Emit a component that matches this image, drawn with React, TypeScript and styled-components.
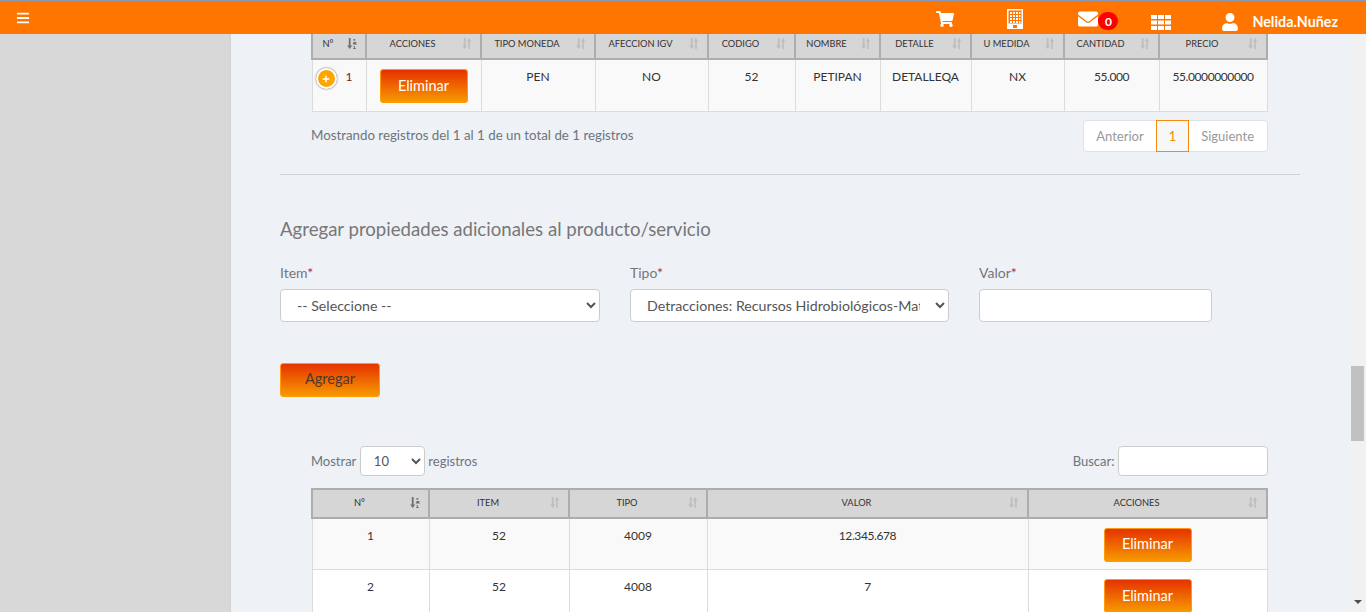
import { createGlobalStyle, styled } from "styled-components";
import { FaBars, FaShoppingCart, FaEnvelope, FaUser, FaPlus } from "react-icons/fa";

const Global = createGlobalStyle`
  html, body { margin: 0; padding: 0; height: 100%; overflow: hidden; }
  body { font-family: Lato, "Liberation Sans", sans-serif; font-size: 14px; color: #6c757d; }
  * { box-sizing: border-box; }
`;

const Page = styled.div`
  width: 1366px;
  height: 612px;
  display: flex;
  flex-direction: column;
  overflow: hidden;
  background: #eef1f6;
`;

const Navbar = styled.header`
  flex: 0 0 34px;
  position: relative;
  background: #ff7500;
  border-top: 1px solid #8a9ab5;
  display: flex;
  align-items: center;
  padding: 0 28px 0 16px;
  color: #fff;
  z-index: 2;
`;

const Burger = styled.span`
  display: flex;
  font-size: 14px;
`;

const NavIcons = styled.div`
  margin-left: auto;
  display: flex;
  align-items: center;
`;

const NavIcon = styled.span<{ $w: number; $size: number; $top: number }>`
  width: ${(p) => p.$w}px;
  display: flex;
  font-size: ${(p) => p.$size}px;
  margin-top: ${(p) => p.$top}px;
`;

const MailBadge = styled.span`
  width: 20px;
  height: 18px;
  border-radius: 9px;
  background: #f00;
  color: #fff;
  font-size: 12px;
  font-weight: 700;
  display: flex;
  align-items: center;
  justify-content: center;
  margin: 7px 33px 0 0;
`;

const UserName = styled.span`
  font-size: 14.3px;
  font-weight: 700;
  color: #fff;
  margin: 7px 0 0 14px;
`;

const Body = styled.div`
  flex: 1;
  display: flex;
  min-height: 0;
`;

const Sidebar = styled.aside`
  flex: 0 0 231px;
  background: #d8d8d8;
  box-shadow: inset -2px 0 2px -1px #cfd2d6;
`;

const Main = styled.main`
  flex: 1;
  min-width: 0;
  margin-top: -5px;
  padding: 0 50px 0 49px;
  overflow: hidden;
`;

const Indented = styled.div`
  padding: 0 32px 0 31px;
`;

const Table = styled.table`
  width: 955px;
  table-layout: fixed;
  border-collapse: collapse;
  font-size: 12px;
  color: #333;
`;

const Th = styled.th<{ $w: number }>`
  width: ${(p) => p.$w}px;
  height: 29px;
  position: relative;
  background: #d6d6d6;
  border: 2px solid #adadad;
  font-size: 9.3px;
  font-weight: 400;
  color: #333;
  text-align: center;
  padding: 0 28px 2px 6px;
  white-space: nowrap;
`;

const SortMark = styled.svg<{ $active?: boolean }>`
  position: absolute;
  right: 7px;
  top: 7px;
  width: 11px;
  height: 11px;
  fill: ${(p) => (p.$active ? "#6f6f6f" : "#bdbdbd")};
`;

const Row = styled.tr<{ $alt?: boolean }>`
  height: 52px;
  background: ${(p) => (p.$alt ? "#f9f9f9" : "#fff")};
`;

const Td = styled.td<{ $tight?: boolean }>`
  border: 1px solid #dcdcdc;
  vertical-align: top;
  text-align: center;
  padding: 9px 4px 0;
  line-height: 15px;
  letter-spacing: ${(p) => (p.$tight ? "-0.4px" : "0")};
`;

const IndexTd = styled(Td)`
  position: relative;
  text-align: right;
  padding-right: 13px;
  color: #7a2020;
`;

const Expand = styled.span`
  position: absolute;
  left: 3px;
  top: 8px;
  width: 21px;
  height: 21px;
  border-radius: 50%;
  background: #ffa500;
  border: 2px solid #fff;
  box-shadow: 0 0 2px #555;
  color: #fff;
  font-size: 8px;
  display: flex;
  align-items: center;
  justify-content: center;
`;

const GradientButton = styled.button`
  background: linear-gradient(#e63200, #f79a00);
  border: 1px solid #ff9d00;
  border-radius: 3px;
  font-family: inherit;
  font-size: 14.5px;
  padding: 0 0 2px;
`;

const DeleteButton = styled(GradientButton)`
  width: 88px;
  height: 34px;
  color: #fff;
`;

const AddButton = styled(GradientButton)`
  width: 100px;
  height: 34px;
  color: #4a3a30;
  display: block;
`;

const TableFoot = styled.div`
  height: 62px;
  padding-top: 8px;
  display: flex;
  justify-content: space-between;
  align-items: flex-start;
`;

const InfoText = styled.span`
  font-size: 13.3px;
  color: #6c757d;
  margin-top: 7px;
`;

const Pager = styled.div`
  display: flex;
  height: 32px;
  padding-right: 1px;
  background: #fff;
  border: 1px solid #dee2e6;
  border-radius: 4px;
  font-size: 13px;
  color: #999;
`;

const PageLink = styled.span<{ $current?: boolean }>`
  display: flex;
  align-items: center;
  padding: 0 12px;
  ${(p) =>
    p.$current &&
    `margin: -1px 0;
     border: 1px solid #f58a0f;
     background: #f7f7f7;
     color: #f58a0f;`}
`;

const Rule = styled.hr`
  margin: 0;
  border: 0;
  border-top: 1px solid #cfd2d6;
`;

const Title = styled.h4`
  margin: 43px 0 24px;
  font-size: 18.6px;
  line-height: 22px;
  font-weight: 400;
  color: #777;
`;

const FormRow = styled.div`
  display: flex;
  gap: 30px;
  margin-bottom: 41px;
`;

const Field = styled.label<{ $w: number }>`
  width: ${(p) => p.$w}px;
  display: block;
  font-size: 14px;
  color: #777;
`;

const Required = styled.span`
  color: #a33;
`;

const LabelText = styled.div`
  height: 17px;
  line-height: 17px;
  margin-bottom: 8px;
`;

const Select = styled.select`
  width: 100%;
  height: 33px;
  background-color: #fff;
  border: 1px solid #ccc;
  border-radius: 4px;
  padding: 0 12px;
  font-family: inherit;
  font-size: 14.2px;
  color: #555;
`;

const Input = styled.input`
  width: 100%;
  height: 33px;
  background: #fff;
  border: 1px solid #ccc;
  border-radius: 4px;
`;

const SecondBlock = styled(Indented)`
  margin-top: 49px;
`;

const Toolbar = styled.div`
  display: flex;
  justify-content: space-between;
  align-items: center;
  height: 30px;
  margin-bottom: 12px;
  font-size: 13px;
`;

const ToolbarSide = styled.div`
  display: flex;
  align-items: center;
  gap: 3.5px;
`;

const LengthSelect = styled(Select)`
  width: 65px;
  height: 30px;
  padding: 0 9px;
  font-size: 13px;
`;

const SearchInput = styled(Input)`
  width: 150px;
  height: 30px;
`;

const Scrollbar = styled.div`
  flex: 0 0 16px;
  background: #f1f1f1;
  padding: 332px 2px 0 1px;
  position: relative;
`;

const Thumb = styled.div`
  height: 75px;
  background: #c1c1c1;
`;

const ArrowDown = styled.span`
  position: absolute;
  bottom: 8px;
  left: 4px;
  border: 4px solid transparent;
  border-top: 4px solid #505050;
  border-bottom: 0;
`;

const BuildingIcon = () => (
  <svg width="16" height="20" viewBox="0 0 16 20" fill="#fff">
    <path fillRule="evenodd" d="M0 0h16v20H0zM1.500 1.500v13h13v-13zM6 16v3h4v-3z" />
    <path d="M3 3h2v2H3zM6 3h2v2H6zM9 3h2v2H9zM12 3h1.500v2H12zM3 6h2v2H3zM6 6h2v2H6zM9 6h2v2H9zM12 6h1.500v2H12zM3 9h2v2H3zM6 9h2v2H6zM9 9h2v2H9zM12 9h1.500v2H12zM3 12h2v2H3zM6 12h2v2H6zM9 12h2v2H9zM12 12h1.500v2H12z" />
  </svg>
);

const GridIcon = () => (
  <svg width="20" height="15" viewBox="0 0 20 15" fill="#fff">
    <path d="M0 0h6v4H0zM7 0h6v4H7zM14 0h6v4h-6zM0 5.500h6v4H0zM7 5.500h6v4H7zM14 5.500h6v4h-6zM0 11h6v4H0zM7 11h6v4H7zM14 11h6v4h-6z" />
  </svg>
);

const Sort = ({ active }: { active?: boolean }) => (
  <SortMark $active={active} viewBox="0 0 11 11">
    <path d="M1.800 0h1.800v7.500H5.200L2.700 11 .2 7.500h1.600z" />
    {active ? (
      <path d="M6.500 8h1.300v2h1v1H6.200v-1h.8zM6.500 1h1.700v1.700h-1.700zM5.800 4h3.600v1.100h-1l2 1.400H5.800V5.400l1.200-.3z" />
    ) : (
      <path d="M7.800 11H6.200V3.500H4.800L7 0l2.200 3.500H7.800z" />
    )}
  </SortMark>
);

const Head = ({ cols }: { cols: [string, number][] }) => (
  <thead>
    <tr>
      {cols.map(([label, w], i) => (
        <Th key={label} $w={w}>
          {label}
          <Sort active={i === 0} />
        </Th>
      ))}
    </tr>
  </thead>
);

const productCols: [string, number][] = [
  ["N°", 54],
  ["ACCIONES", 115],
  ["TIPO MONEDA", 114],
  ["AFECCION IGV", 113],
  ["CODIGO", 87],
  ["NOMBRE", 85],
  ["DETALLE", 91],
  ["U MEDIDA", 93],
  ["CANTIDAD", 95],
  ["PRECIO", 108],
];

const propCols: [string, number][] = [
  ["N°", 117],
  ["ITEM", 140],
  ["TIPO", 138],
  ["VALOR", 321],
  ["ACCIONES", 239],
];

const props = [
  { n: 1, item: 52, tipo: 4009, valor: "12.345.678" },
  { n: 2, item: 52, tipo: 4008, valor: "7" },
];

export default function App() {
  return (
    <>
      <Global />
      <Page>
        <Navbar>
          <Burger><FaBars /></Burger>
          <NavIcons>
            <NavIcon $w={71} $size={18} $top={3}><FaShoppingCart /></NavIcon>
            <NavIcon $w={71} $size={20} $top={2}><BuildingIcon /></NavIcon>
            <NavIcon $w={20} $size={20} $top={2}><FaEnvelope /></NavIcon>
            <MailBadge>0</MailBadge>
            <NavIcon $w={71} $size={20} $top={9}><GridIcon /></NavIcon>
            <NavIcon $w={16} $size={18} $top={9}><FaUser /></NavIcon>
            <UserName>Nelida.Nuñez</UserName>
          </NavIcons>
        </Navbar>
        <Body>
          <Sidebar />
          <Main>
            <Indented>
              <Table>
                <Head cols={productCols} />
                <tbody>
                  <Row $alt>
                    <IndexTd>
                      <Expand><FaPlus /></Expand>
                      1
                    </IndexTd>
                    <Td><DeleteButton>Eliminar</DeleteButton></Td>
                    <Td>PEN</Td>
                    <Td>NO</Td>
                    <Td>52</Td>
                    <Td>PETIPAN</Td>
                    <Td>DETALLEQA</Td>
                    <Td>NX</Td>
                    <Td $tight>55.000</Td>
                    <Td $tight>55.0000000000</Td>
                  </Row>
                </tbody>
              </Table>
              <TableFoot>
                <InfoText>Mostrando registros del 1 al 1 de un total de 1 registros</InfoText>
                <Pager>
                  <PageLink>Anterior</PageLink>
                  <PageLink $current>1</PageLink>
                  <PageLink>Siguiente</PageLink>
                </Pager>
              </TableFoot>
            </Indented>
            <Rule />
            <Title>Agregar propiedades adicionales al producto/servicio</Title>
            <FormRow>
              <Field $w={320}>
                <LabelText>Item<Required>*</Required></LabelText>
                <Select defaultValue="">
                  <option value="">-- Seleccione --</option>
                </Select>
              </Field>
              <Field $w={319}>
                <LabelText>Tipo<Required>*</Required></LabelText>
                <Select>
                  <option>Detracciones: Recursos Hidrobiológicos-Matrícula de embarcación</option>
                </Select>
              </Field>
              <Field $w={233}>
                <LabelText>Valor<Required>*</Required></LabelText>
                <Input />
              </Field>
            </FormRow>
            <AddButton>Agregar</AddButton>
            <SecondBlock>
              <Toolbar>
                <ToolbarSide>
                  Mostrar
                  <LengthSelect defaultValue="10">
                    <option value="10">10</option>
                  </LengthSelect>
                  registros
                </ToolbarSide>
                <ToolbarSide>
                  Buscar:
                  <SearchInput />
                </ToolbarSide>
              </Toolbar>
              <Table>
                <Head cols={propCols} />
                <tbody>
                  {props.map((p) => (
                    <Row key={p.n} $alt={p.n % 2 === 1}>
                      <Td>{p.n}</Td>
                      <Td>{p.item}</Td>
                      <Td>{p.tipo}</Td>
                      <Td $tight>{p.valor}</Td>
                      <Td><DeleteButton>Eliminar</DeleteButton></Td>
                    </Row>
                  ))}
                </tbody>
              </Table>
            </SecondBlock>
          </Main>
          <Scrollbar>
            <Thumb />
            <ArrowDown />
          </Scrollbar>
        </Body>
      </Page>
    </>
  );
}
